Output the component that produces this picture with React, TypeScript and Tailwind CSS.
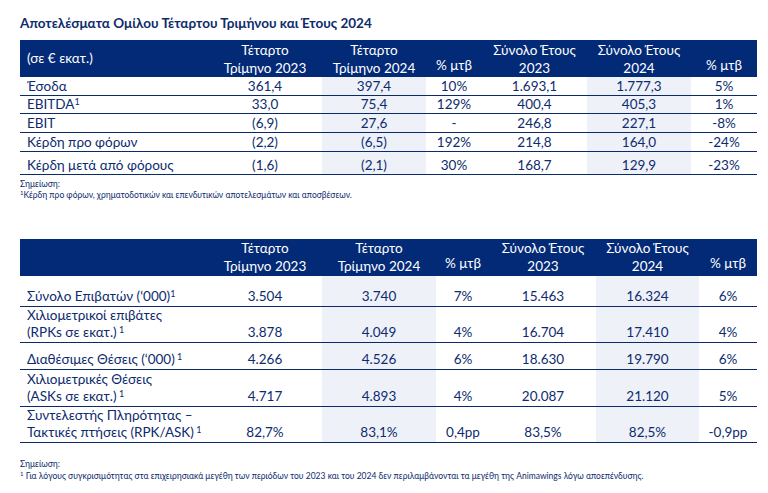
import { FC, ReactNode } from "react";

type Row = {
  label: ReactNode;
  values: string[];
  h: string;
  align?: string;
};

const Sup: FC<{ space?: boolean }> = ({ space }) => (
  <sup className="text-[9px]">{space ? "\u00a01" : "1"}</sup>
);

const topRows: Row[] = [
  { label: "Έσοδα", values: ["361,4", "397,4", "10%", "1.693,1", "1.777,3", "5%"], h: "h-[18px]" },
  {
    label: (
      <>
        EBITDA
        <Sup />
      </>
    ),
    values: ["33,0", "75,4", "129%", "400,4", "405,3", "1%"],
    h: "h-[18px]",
  },
  { label: "EBIT", values: ["(6,9)", "27,6", "-", "246,8", "227,1", "-8%"], h: "h-[19px]" },
  { label: "Κέρδη προ φόρων", values: ["(2,2)", "(6,5)", "192%", "214,8", "164,0", "-24%"], h: "h-[19px]" },
  {
    label: "Κέρδη μετά από φόρους",
    values: ["(1,6)", "(2,1)", "30%", "168,7", "129,9", "-23%"],
    h: "h-[23px]",
    align: "align-bottom pb-[1px]",
  },
];

const bottomRows: Row[] = [
  {
    label: (
      <>
        Σύνολο Επιβατών (‘000)
        <Sup />
      </>
    ),
    values: ["3.504", "3.740", "7%", "15.463", "16.324", "6%"],
    h: "h-[31px]",
  },
  {
    label: (
      <>
        Χιλιομετρικοί επιβάτες
        <br />
        (RPKs σε εκατ.)
        <Sup space />
      </>
    ),
    values: ["3.878", "4.049", "4%", "16.704", "17.410", "4%"],
    h: "h-[36px]",
  },
  {
    label: (
      <>
        Διαθέσιμες Θέσεις (‘000)
        <Sup space />
      </>
    ),
    values: ["4.266", "4.526", "6%", "18.630", "19.790", "6%"],
    h: "h-[27px]",
  },
  {
    label: (
      <>
        Χιλιομετρικές Θέσεις
        <br />
        (ASKs σε εκατ.)
        <Sup space />
      </>
    ),
    values: ["4.717", "4.893", "4%", "20.087", "21.120", "5%"],
    h: "h-[37px]",
  },
  {
    label: (
      <>
        Συντελεστής Πληρότητας –
        <br />
        Τακτικές πτήσεις (RPK/ASK)
        <Sup space />
      </>
    ),
    values: ["82,7%", "83,1%", "0,4pp", "83,5%", "82,5%", "-0,9pp"],
    h: "h-[36px]",
  },
];

const HeaderCells: FC = () => (
  <>
    <th className="font-normal text-center leading-[18px]">
      Τέταρτο
      <br />
      Τρίμηνο 2023
    </th>
    <th className="font-normal text-center leading-[18px]">
      Τέταρτο
      <br />
      Τρίμηνο 2024
    </th>
    <th className="font-normal text-center align-bottom pb-[2px]">% μτβ</th>
    <th className="font-normal text-center leading-[18px]">
      Σύνολο Έτους
      <br />
      2023
    </th>
    <th className="font-normal text-center leading-[18px]">
      Σύνολο Έτους
      <br />
      2024
    </th>
    <th className="font-normal text-center align-bottom pb-[2px]">% μτβ</th>
  </>
);

const App: FC = () => {
  return (
    <div
      className="w-[768px] h-[493px] bg-white text-[#0d2b6e] overflow-hidden"
      style={{ fontFamily: "Lato, 'Noto Sans', sans-serif" }}
    >
      <div className="pl-[20px] pr-[11px]">
        <h1 className="pt-[14px] text-[13.5px] font-bold leading-[18px] text-[#0e2c6c]">
          Αποτελέσματα Ομίλου Τέταρτου Τριμήνου και Έτους 2024
        </h1>

        {/* first table */}
        <table className="mt-[8px] w-[737px] table-fixed text-[13.5px]">
          <colgroup>
            <col className="w-[188px]" />
            <col className="w-[114px]" />
            <col className="w-[104px]" />
            <col className="w-[56px]" />
            <col className="w-[105px]" />
            <col className="w-[104px]" />
            <col className="w-[66px]" />
          </colgroup>
          <thead>
            <tr className="h-[37px] bg-[#032a77] text-white">
              <th className="font-normal text-left pl-[7px]">(σε € εκατ.)</th>
              <HeaderCells />
            </tr>
          </thead>
          <tbody>
            {topRows.map((r, i) => (
              <tr key={i} className={`${r.h} border-b border-[#0b2a6c] leading-[16px]`}>
                <td className={`pl-[7px] ${r.align ?? "align-middle"}`}>{r.label}</td>
                {r.values.map((v, j) => (
                  <td
                    key={j}
                    className={`text-center ${r.align ?? "align-middle"} ${
                      j === 1 || j === 4 ? "bg-[#eef1f8]" : ""
                    }`}
                  >
                    {v}
                  </td>
                ))}
              </tr>
            ))}
          </tbody>
        </table>

        <div className="mt-[4px] text-[8.5px] leading-[11px]">
          <p>Σημείωση:</p>
          <p>
            <sup className="text-[6px]">1</sup>Κέρδη προ φόρων, χρηματοδοτικών και επενδυτικών αποτελεσμάτων και
            αποσβέσεων.
          </p>
        </div>

        {/* second table */}
        <table className="mt-[38px] w-[737px] table-fixed text-[13.5px]">
          <colgroup>
            <col className="w-[188px]" />
            <col className="w-[114px]" />
            <col className="w-[114px]" />
            <col className="w-[54px]" />
            <col className="w-[106px]" />
            <col className="w-[103px]" />
            <col className="w-[58px]" />
          </colgroup>
          <thead>
            <tr className="h-[37px] bg-[#032a77] text-white">
              <th />
              <HeaderCells />
            </tr>
          </thead>
          <tbody>
            {bottomRows.map((r, i) => (
              <tr key={i} className={`${r.h} border-b border-[#0b2a6c] leading-[17px]`}>
                <td className="pl-[7px] align-bottom pb-[1px]">{r.label}</td>
                {r.values.map((v, j) => (
                  <td
                    key={j}
                    className={`text-center align-bottom pb-[1px] ${j === 1 || j === 4 ? "bg-[#eef1f8]" : ""}`}
                  >
                    {v}
                  </td>
                ))}
              </tr>
            ))}
          </tbody>
        </table>

        <div className="mt-[15px] text-[8.5px] leading-[12px]">
          <p>Σημείωση:</p>
          <p>
            <sup className="text-[6px]">1</sup> Για λόγους συγκρισιμότητας στα επιχειρησιακά μεγέθη των περιόδων του
            2023 και του 2024 δεν περιλαμβάνονται τα μεγέθη της Animawings λόγω αποεπένδυσης.
          </p>
        </div>
      </div>
    </div>
  );
};

export default App;
